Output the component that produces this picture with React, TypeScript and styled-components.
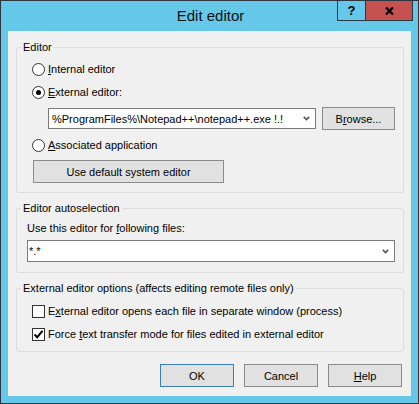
import React from "react";
import styled, { createGlobalStyle } from "styled-components";

const GlobalStyle = createGlobalStyle`
  html, body {
    margin: 0;
    padding: 0;
    background: #ffffff;
  }
  body {
    font-family: "Liberation Sans", Arial, sans-serif;
    font-size: 11px;
    color: #000000;
  }
  *, *::before, *::after {
    box-sizing: border-box;
  }
`;

/* ---------- window frame ---------- */

const Window = styled.div`
  width: 419px;
  height: 404px;
  border: 1px solid #2b3640;
  background: #65c8e9;
  display: flex;
  flex-direction: column;
  padding: 0 7px 7px;
`;

const TitleBar = styled.div`
  height: 30px;
  display: grid;
  grid-template-columns: 1fr auto 1fr;
  margin-right: -2px;
`;

const Title = styled.div`
  grid-column: 2;
  font-size: 15px;
  line-height: 30px;
  color: #111111;
`;

const CaptionButtons = styled.div`
  grid-column: 3;
  justify-self: end;
  align-self: start;
  display: flex;
`;

const CaptionButton = styled.div<{ $close?: boolean }>`
  width: ${(p) => (p.$close ? 47 : 29)}px;
  height: 20px;
  border: 1px solid #2b3640;
  border-top: none;
  ${(p) => (p.$close ? "border-left: none;" : "")}
  background: ${(p) => (p.$close ? "#c75050" : "transparent")};
  display: flex;
  align-items: center;
  justify-content: center;
  font-weight: bold;
  font-size: 13px;
  color: #000000;
`;

/* ---------- dialog body ---------- */

const Client = styled.div`
  flex: 1;
  background: #f0f0f0;
  display: flex;
  flex-direction: column;
  padding: 8px 7px 0 8px;
`;

const Group = styled.fieldset`
  margin: 0 0 7px;
  padding: 0;
  border: 1px solid #dcdcdc;
  border-radius: 3px;
  min-width: 0;
`;

const Legend = styled.legend`
  margin-left: 4px;
  padding: 0 2px;
  line-height: 16px;
`;

const GroupBody = styled.div<{ $pad: string; $gap: number }>`
  padding: ${(p) => p.$pad};
  display: flex;
  flex-direction: column;
  align-items: flex-start;
  gap: ${(p) => p.$gap}px;
`;

const Key = styled.span`
  text-decoration: underline;
  text-underline-offset: 1px;
`;

const OptionRow = styled.label`
  height: 16px;
  display: flex;
  align-items: center;
  gap: 3px;
  white-space: nowrap;
`;

const RadioCircle = styled.span<{ $checked?: boolean }>`
  width: 13px;
  height: 13px;
  border-radius: 50%;
  border: 1px solid #333333;
  background: #ffffff;
  display: flex;
  align-items: center;
  justify-content: center;
  &::after {
    content: "";
    width: 5px;
    height: 5px;
    border-radius: 50%;
    background: ${(p) => (p.$checked ? "#000000" : "transparent")};
  }
`;

const CheckBoxFrame = styled.span`
  width: 13px;
  height: 13px;
  border: 1px solid #333333;
  background: #ffffff;
  display: flex;
  align-items: center;
  justify-content: center;
`;

const Label = styled.div`
  line-height: 16px;
  white-space: nowrap;
`;

const PathRow = styled.div`
  align-self: stretch;
  margin-left: 16px;
  display: flex;
  align-items: center;
  gap: 6px;
`;

const Combo = styled.div<{ $inset: number; $height: number }>`
  flex: 1;
  height: ${(p) => p.$height}px;
  border: 1px solid #7a7a7a;
  background: #ffffff;
  display: flex;
  align-items: center;
  padding-left: ${(p) => p.$inset}px;
  padding-right: 5px;
  white-space: nowrap;
`;

const ComboWrap = styled.div`
  align-self: stretch;
  display: flex;
`;

const ComboText = styled.span`
  flex: 1;
  overflow: hidden;
`;

const Button = styled.button<{ $width: number; $default?: boolean }>`
  width: ${(p) => p.$width}px;
  height: 23px;
  margin: 0;
  padding: 0;
  border: 1px solid ${(p) => (p.$default ? "#3c7fb1" : "#8a8a8a")};
  background: #e1e1e1;
  font: inherit;
  color: #000000;
  display: flex;
  align-items: center;
  justify-content: center;
  flex-shrink: 0;
`;

const WideButton = styled(Button)`
  margin-left: 1px;
`;

const ButtonBar = styled.div`
  margin-top: 5px;
  margin-right: 2px;
  display: flex;
  justify-content: flex-end;
  gap: 10px;
`;

/* ---------- small drawings ---------- */

const Chevron = () => (
  <svg width="7" height="5" viewBox="0 0 7 5">
    <polyline
      points="0.8,0.8 3.5,3.6 6.2,0.8"
      fill="none"
      stroke="#5a5a5a"
      strokeWidth="1.7"
    />
  </svg>
);

const CheckMark = () => (
  <svg width="11" height="11" viewBox="0 0 11 11">
    <polyline
      points="1.5,5.5 4.2,8.2 9.5,1.8"
      fill="none"
      stroke="#000000"
      strokeWidth="2"
    />
  </svg>
);

const CloseGlyph = () => (
  <svg width="9" height="8" viewBox="0 0 9 8">
    <path d="M1 0.5 L8 7.5 M8 0.5 L1 7.5" stroke="#000000" strokeWidth="2.2" />
  </svg>
);

const Radio = ({ checked, children }: { checked?: boolean; children: React.ReactNode }) => (
  <OptionRow>
    <RadioCircle $checked={checked} />
    <span>{children}</span>
  </OptionRow>
);

const Check = ({ checked, children }: { checked?: boolean; children: React.ReactNode }) => (
  <OptionRow>
    <CheckBoxFrame>{checked && <CheckMark />}</CheckBoxFrame>
    <span>{children}</span>
  </OptionRow>
);

export default function App() {
  return (
    <>
      <GlobalStyle />
      <Window>
        <TitleBar>
          <Title>Edit editor</Title>
          <CaptionButtons>
            <CaptionButton>?</CaptionButton>
            <CaptionButton $close>
              <CloseGlyph />
            </CaptionButton>
          </CaptionButtons>
        </TitleBar>
        <Client>
          <Group>
            <Legend>Editor</Legend>
            <GroupBody $pad="6px 8px 9px 15px" $gap={7}>
              <Radio>
                <Key>I</Key>nternal editor
              </Radio>
              <Radio checked>
                <Key>E</Key>xternal editor:
              </Radio>
              <PathRow>
                <Combo $inset={3} $height={21}>
                  <ComboText>%ProgramFiles%\Notepad++\notepad++.exe !.!</ComboText>
                  <Chevron />
                </Combo>
                <Button $width={73}>
                  B<Key>r</Key>owse...
                </Button>
              </PathRow>
              <Radio>
                <Key>A</Key>ssociated application
              </Radio>
              <WideButton $width={191}>Use default system editor</WideButton>
            </GroupBody>
          </Group>

          <Group>
            <Legend>Editor autoselection</Legend>
            <GroupBody $pad="4px 8px 10px 10px" $gap={4}>
              <Label>
                Use this editor for <Key>f</Key>ollowing files:
              </Label>
              <ComboWrap>
                <Combo $inset={1} $height={22}>
                  <ComboText>*.*</ComboText>
                  <Chevron />
                </Combo>
              </ComboWrap>
            </GroupBody>
          </Group>

          <Group>
            <Legend>External editor options (affects editing remote files only)</Legend>
            <GroupBody $pad="7px 8px 9px 15px" $gap={7}>
              <Check>
                E<Key>x</Key>ternal editor opens each file in separate window (process)
              </Check>
              <Check checked>
                Force <Key>t</Key>ext transfer mode for files edited in external editor
              </Check>
            </GroupBody>
          </Group>

          <ButtonBar>
            <Button $width={74} $default>
              OK
            </Button>
            <Button $width={74}>Cancel</Button>
            <Button $width={74}>
              <Key>H</Key>elp
            </Button>
          </ButtonBar>
        </Client>
      </Window>
    </>
  );
}
